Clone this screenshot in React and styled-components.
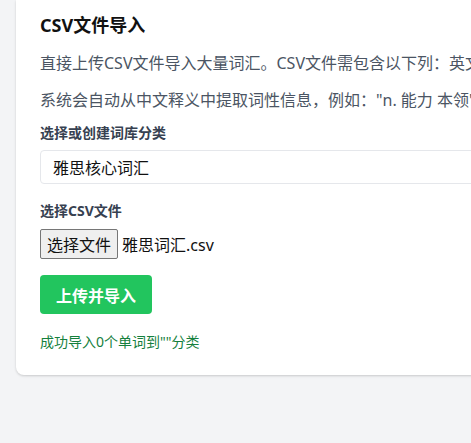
import React from "react";
import styled, { createGlobalStyle } from "styled-components";

const GlobalStyle = createGlobalStyle`
  body {
    margin: 0;
    background: #f3f4f6;
    overflow: hidden;
    font-family: "Noto Sans", "Noto Sans CJK SC", sans-serif;
  }
`;

const Page = styled.div`
  padding-left: 16px;
  height: 443px;
`;

const Card = styled.div`
  width: 900px;
  background: #fff;
  border-radius: 0 0 8px 8px;
  box-shadow: 0 1px 3px rgba(0, 0, 0, 0.12), 0 1px 2px rgba(0, 0, 0, 0.06);
  padding: 12px 24px 23px;
  box-sizing: border-box;
`;

const Title = styled.h2`
  margin: 0 0 13px;
  font-size: 18px;
  line-height: 26px;
  font-weight: 700;
  color: #111;
`;

const Note = styled.p`
  margin: 0 0 13px;
  font-size: 16px;
  line-height: 24px;
  color: #4b5563;
  white-space: nowrap;
`;

const Label = styled.label`
  display: block;
  font-size: 14px;
  line-height: 20px;
  font-weight: 700;
  color: #374151;
  margin-top: ${({ $top }) => $top}px;
`;

const TextBox = styled.input`
  display: block;
  box-sizing: border-box;
  width: 100%;
  height: 34px;
  margin-top: 7px;
  padding: 0 12px;
  border: 1px solid #e5e7eb;
  border-radius: 4px;
  font: inherit;
  font-size: 16px;
  color: #111;
  outline: none;
`;

const FileRow = styled.div`
  display: flex;
  align-items: center;
  gap: 4px;
  margin-top: 8px;
  height: 30px;
`;

const FileButton = styled.button`
  height: 30px;
  padding: 0 6px;
  border: 1px solid #767676;
  border-radius: 2px;
  background: #efefef;
  font: inherit;
  font-size: 16px;
  color: #111;
`;

const FileName = styled.span`
  font-size: 16px;
  color: #111;
`;

const UploadButton = styled.button`
  display: block;
  margin-top: 16px;
  height: 39px;
  width: 112px;
  border: none;
  border-radius: 4px;
  background: #22c55e;
  color: #fff;
  font: inherit;
  font-size: 16px;
  font-weight: 700;
`;

const Status = styled.div`
  margin-top: 18px;
  font-size: 14px;
  line-height: 20px;
  color: #15803d;
`;

export default function App() {
  return (
    <>
      <GlobalStyle />
      <Page>
        <Card>
          <Title>CSV文件导入</Title>
          <Note>直接上传CSV文件导入大量词汇。CSV文件需包含以下列：英文单词、中文释义</Note>
          <Note>系统会自动从中文释义中提取词性信息，例如："n. 能力 本领"</Note>
          <Label $top={-2}>选择或创建词库分类</Label>
          <TextBox readOnly defaultValue="雅思核心词汇" />
          <Label $top={17}>选择CSV文件</Label>
          <FileRow>
            <FileButton>选择文件</FileButton>
            <FileName>雅思词汇.csv</FileName>
          </FileRow>
          <UploadButton>上传并导入</UploadButton>
          <Status>成功导入0个单词到""分类</Status>
        </Card>
      </Page>
    </>
  );
}
